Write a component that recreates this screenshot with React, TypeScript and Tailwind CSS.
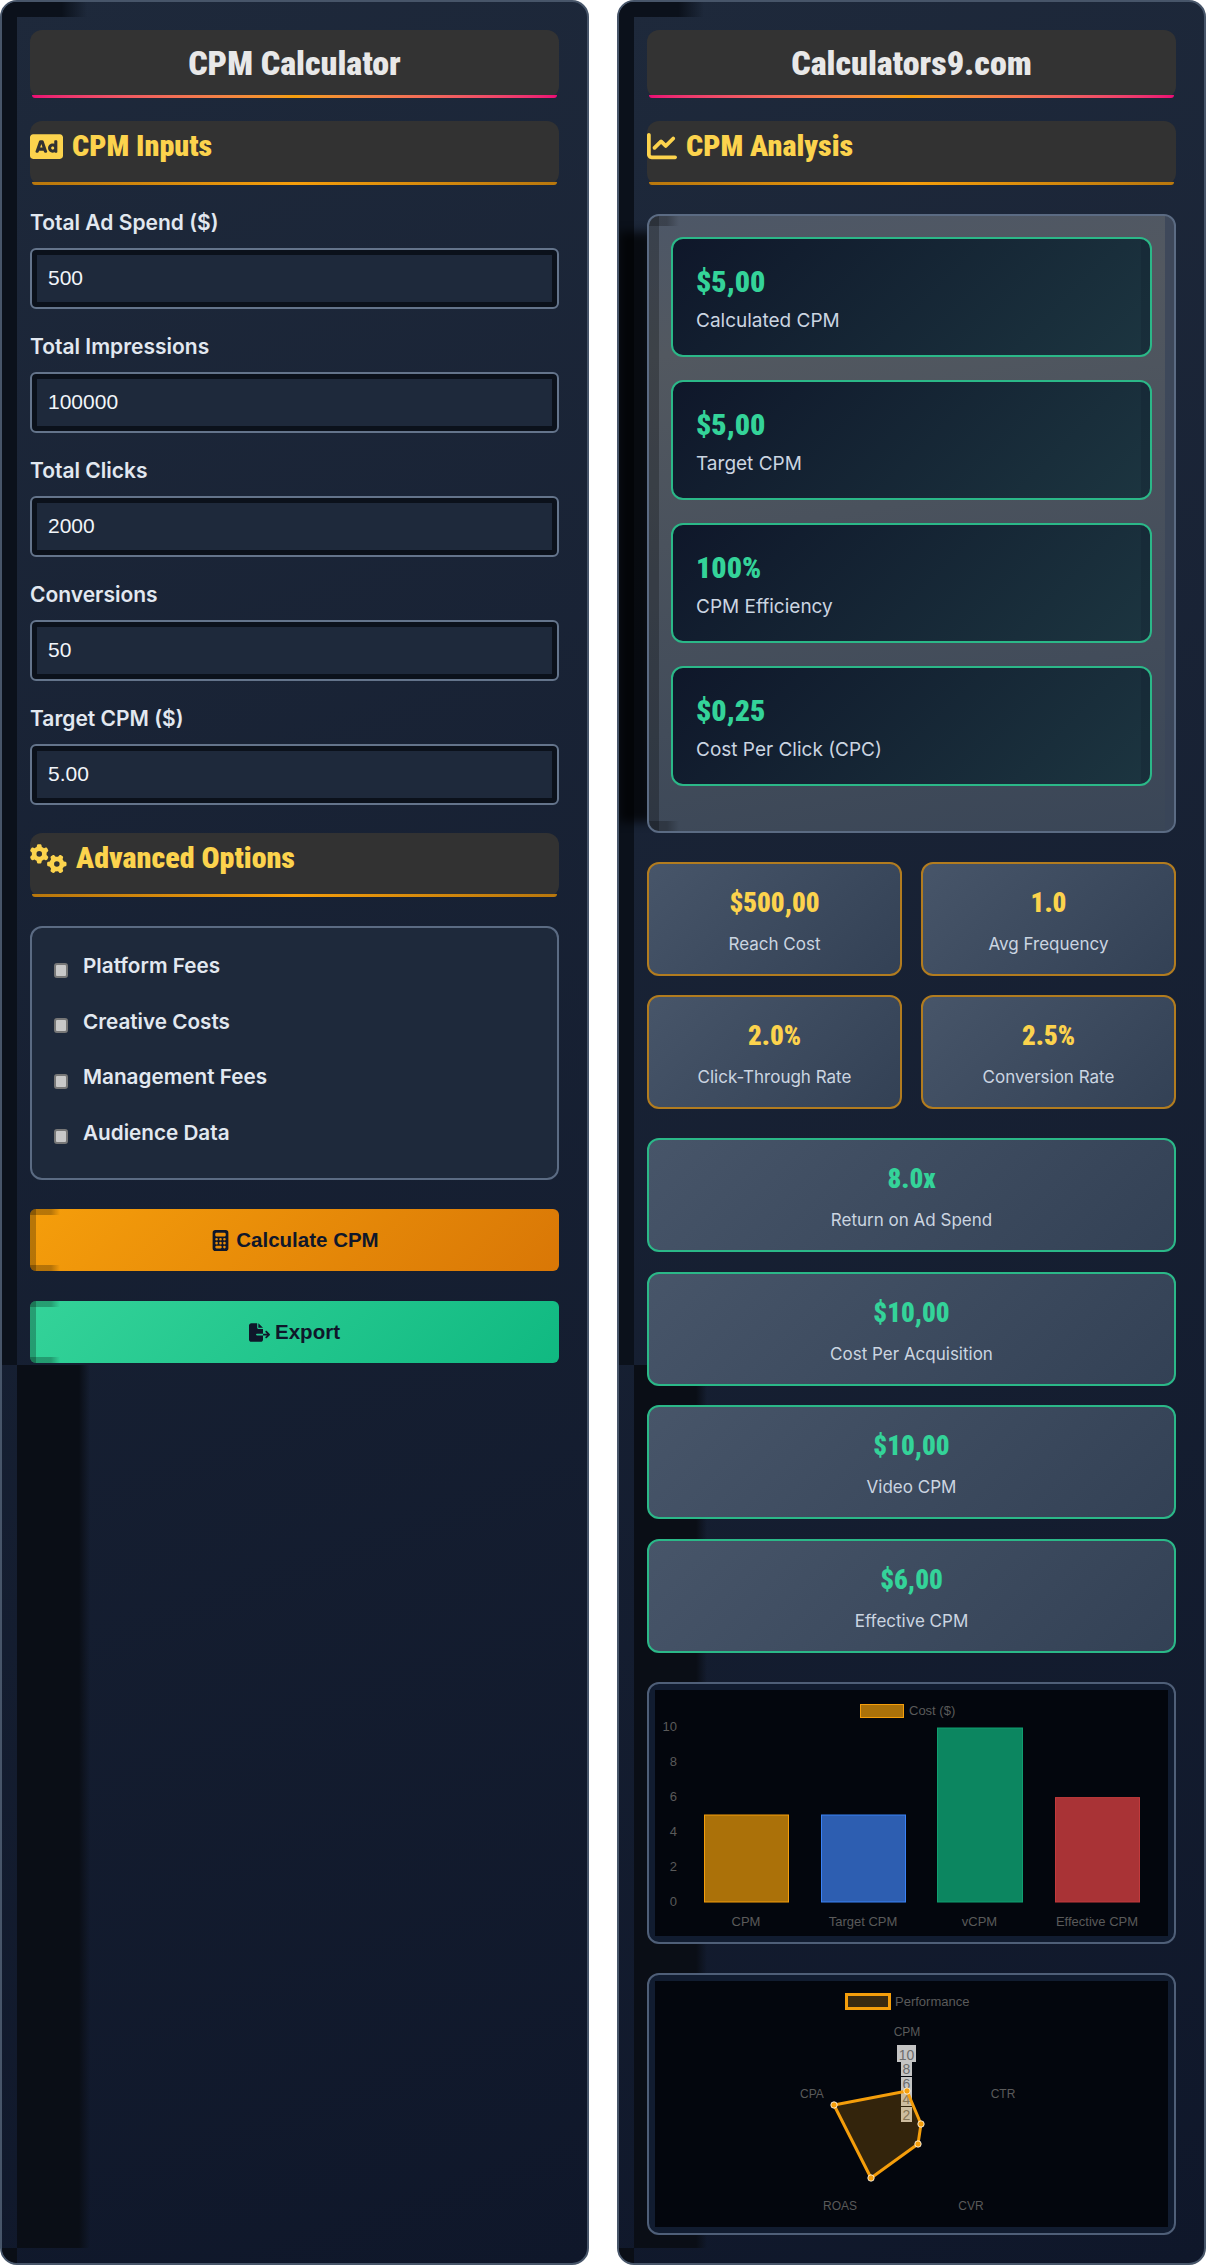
import React from 'react';
import { FaAd } from 'react-icons/fa';
import { FaChartLine, FaGears, FaCalculator, FaFileExport } from 'react-icons/fa6';

const condensed = "font-['Roboto_Condensed','Roboto',sans-serif] font-black [font-stretch:75%]";

const inputs = [
  { label: 'Total Ad Spend ($)', value: '500' },
  { label: 'Total Impressions', value: '100000' },
  { label: 'Total Clicks', value: '2000' },
  { label: 'Conversions', value: '50' },
  { label: 'Target CPM ($)', value: '5.00' },
];

const options = ['Platform Fees', 'Creative Costs', 'Management Fees', 'Audience Data'];

const mainCards = [
  { value: '$5,00', label: 'Calculated CPM' },
  { value: '$5,00', label: 'Target CPM' },
  { value: '100%', label: 'CPM Efficiency' },
  { value: '$0,25', label: 'Cost Per Click (CPC)' },
];

const smallCards = [
  { value: '$500,00', label: 'Reach Cost' },
  { value: '1.0', label: 'Avg Frequency' },
  { value: '2.0%', label: 'Click-Through Rate' },
  { value: '2.5%', label: 'Conversion Rate' },
];

const wideCards = [
  { value: '8.0x', label: 'Return on Ad Spend' },
  { value: '$10,00', label: 'Cost Per Acquisition' },
  { value: '$10,00', label: 'Video CPM' },
  { value: '$6,00', label: 'Effective CPM' },
];

const bars = [
  { x: 49, w: 84, v: 5, fill: '#ab7109', stroke: '#f59e0b', label: 'CPM' },
  { x: 166, w: 84, v: 5, fill: '#2d5eb1', stroke: '#3b82f6', label: 'Target CPM' },
  { x: 282, w: 85, v: 10, fill: '#0c8660', stroke: '#0f9f70', label: 'vCPM' },
  { x: 400, w: 84, v: 6, fill: '#a93336', stroke: '#c23a3c', label: 'Effective CPM' },
];

// dark bands of the panel's inset shadow
const PanelShade = () => (
  <>
    <div className="absolute left-0 top-0 h-[1363px] w-[15px] bg-[#0b111b]" />
    <div className="absolute left-0 top-0 h-[15px] w-[85px] bg-gradient-to-r from-[#0b111b] from-70% to-transparent" />
    <div className="absolute left-[15px] top-[1363px] h-[883px] w-[73px] bg-gradient-to-r from-[#0a0e16] from-85% to-transparent" />
    <div className="absolute bottom-0 left-0 h-[15px] w-[15px] bg-[#0a0e16]" />
  </>
);

const Title = ({ children }: { children: React.ReactNode }) => (
  <div className="relative flex h-[68px] items-center justify-center rounded-[12px] bg-[#333333]">
    <h1 className={`${condensed} pb-[2px] text-[34px] leading-none text-[#e8e8e8]`}>{children}</h1>
    <div className="absolute inset-x-[2px] bottom-0 h-[3px] rounded-b-[6px] bg-gradient-to-r from-[#ec0a74] via-[#f59e0b] to-[#ec0a74]" />
  </div>
);

const Section = ({ icon, children }: { icon: React.ReactNode; children: React.ReactNode }) => (
  <div className="relative flex h-[64px] items-start rounded-[12px] bg-[#323232] pt-[8px]">
    <div className="flex h-[34px] items-center">{icon}</div>
    <h2 className={`${condensed} ml-[9px] text-[30px] leading-[34px] text-[#fcd34d]`}>{children}</h2>
    <div className="absolute inset-x-[2px] bottom-0 h-[3px] rounded-b-[6px] bg-gradient-to-r from-[#b8770d] via-[#f59e0b] to-[#b8770d]" />
  </div>
);

const BarChart = () => (
  <svg width="512" height="246" viewBox="0 0 512 246" className="block font-['Liberation_Sans',sans-serif]">
    <rect x="205.5" y="14.5" width="43" height="13" fill="#ab7109" stroke="#f59e0b" strokeWidth="1" />
    <text x="254" y="24.5" fontSize="13" fill="#5a5a5a">Cost ($)</text>
    {[0, 2, 4, 6, 8, 10].map((t) => (
      <text key={t} x="22" y={212 - t * 17.45 + 3.5} fontSize="13" fill="#5a5a5a" textAnchor="end">{t}</text>
    ))}
    {bars.map((b) => {
      const h = b.v * 17.4;
      return (
        <g key={b.label}>
          <rect x={b.x + 0.5} y={212 - h} width={b.w} height={h} fill={b.fill} stroke={b.stroke} strokeWidth="1" />
          <text x={b.x + b.w / 2} y="236" fontSize="13" fill="#5a5a5a" textAnchor="middle">{b.label}</text>
        </g>
      );
    })}
  </svg>
);

const RadarChart = () => {
  const points: [number, number][] = [[252, 110], [266, 143], [263, 163], [216, 197], [179, 124]];
  const ticks = [
    { t: '10', x: 242, y: 64, w: 19, h: 17 },
    { t: '8', x: 246, y: 81, w: 11, h: 14 },
    { t: '6', x: 246, y: 96, w: 11, h: 14 },
    { t: '4', x: 246, y: 110, w: 11, h: 15 },
    { t: '2', x: 246, y: 126, w: 11, h: 15 },
  ];
  return (
    <svg width="512" height="246" viewBox="0 0 512 246" className="block font-['Liberation_Sans',sans-serif]">
      <rect x="191.5" y="13.5" width="43" height="14" fill="#3a2a10" stroke="#f59e0b" strokeWidth="3" />
      <text x="240" y="24.5" fontSize="13" fill="#5a5a5a">Performance</text>
      {ticks.map((k) => (
        <g key={k.t}>
          <rect x={k.x} y={k.y} width={k.w} height={k.h} fill="#c4c4c4" />
          <text x={k.x + k.w / 2} y={k.y + k.h - 2.5} fontSize="14" fill="#6c6c6c" textAnchor="middle">{k.t}</text>
        </g>
      ))}
      <polygon points={points.map((p) => p.join(',')).join(' ')} fill="#f59e0b" fillOpacity="0.2" stroke="#f59e0b" strokeWidth="3" strokeLinejoin="round" />
      {points.map((p) => (
        <circle key={p.join()} cx={p[0]} cy={p[1]} r="3.2" fill="#f59e0b" stroke="#ffffff" strokeOpacity="0.8" strokeWidth="1" />
      ))}
      <text x="252" y="55" fontSize="12" fill="#5a5a5a" textAnchor="middle">CPM</text>
      <text x="348" y="117" fontSize="12" fill="#5a5a5a" textAnchor="middle">CTR</text>
      <text x="316" y="229" fontSize="12" fill="#5a5a5a" textAnchor="middle">CVR</text>
      <text x="185" y="229" fontSize="12" fill="#5a5a5a" textAnchor="middle">ROAS</text>
      <text x="157" y="117" fontSize="12" fill="#5a5a5a" textAnchor="middle">CPA</text>
    </svg>
  );
};

const ChartFrame = ({ children }: { children: React.ReactNode }) => (
  <div className="mt-[29px] h-[262px] overflow-hidden rounded-[12px] border-2 border-[#4f5f78] bg-[#111c30] p-[6px]">
    <div className="h-[246px] bg-[#03060d]">{children}</div>
  </div>
);

const StatCard = ({ value, label, tone }: { value: string; label: string; tone: 'amber' | 'green' }) => (
  <div
    className={`flex h-[114px] flex-col items-center rounded-[12px] border-2 bg-[linear-gradient(135deg,#475569,#334155)] pt-[22px] ${
      tone === 'amber' ? 'border-[#b27c1f]' : 'border-[#2bb888]'
    }`}
  >
    <div className={`${condensed} text-[27px] leading-[34px] ${tone === 'amber' ? 'text-[#fcd34d]' : 'text-[#34d399]'}`}>{value}</div>
    <div className="mt-[12px] font-['Inter',sans-serif] text-[17px] leading-[24px] text-[#cbd5e1]">{label}</div>
  </div>
);

const ActionButton = ({ icon, label, className }: { icon: React.ReactNode; label: string; className: string }) => (
  <button className={`relative flex h-[62px] items-center justify-center gap-[5px] overflow-hidden rounded-[6px] font-['Liberation_Sans',sans-serif] text-[20.5px] font-bold text-[#0f172a] ${className}`}>
    <span className="absolute inset-y-0 left-0 w-[6px] bg-black/25" />
    <span className="absolute left-0 top-0 h-[6px] w-[30px] bg-gradient-to-r from-black/25 from-70% to-transparent" />
    <span className="absolute bottom-0 left-0 h-[6px] w-[30px] bg-gradient-to-r from-black/25 from-70% to-transparent" />
    {icon}
    <span>{label}</span>
  </button>
);

export default function App() {
  return (
    <div className="grid h-[2265px] grid-cols-[589px_589px] justify-between bg-white font-['Inter',sans-serif]">
      <section className="relative h-[2265px] overflow-hidden rounded-[17px] border-2 border-[#475569] bg-[linear-gradient(160deg,#1e293b,#0f172a)]">
        <PanelShade />
        <div className="relative px-[28px] pt-[28px]">
          <Title>CPM Calculator</Title>
          <div className="mt-[23px]">
            <Section icon={<FaAd className="text-[33px] text-[#fcd34d]" />}>CPM Inputs</Section>
          </div>
          <div className="mt-[24px] flex flex-col gap-[24px]">
            {inputs.map((f) => (
              <div key={f.label}>
                <label className="mb-[13px] block pt-[1px] text-[21px] font-semibold leading-[25px] text-[#e2e8f0]">{f.label}</label>
                <input
                  readOnly
                  value={f.value}
                  className="block h-[61px] w-full rounded-[6px] border-2 border-[#64748b] bg-[#1e293b] pb-[2px] pl-[16px] font-['Liberation_Sans',sans-serif] text-[21px] text-[#f1f5f9] shadow-[inset_0_0_0_5px_#0b111b] outline-none"
                />
              </div>
            ))}
          </div>
          <div className="mt-[28px]">
            <Section icon={<FaGears className="text-[37px] text-[#fcd34d]" />}>Advanced Options</Section>
          </div>
          <div className="mt-[29px] flex h-[254px] flex-col justify-start gap-[29.6px] rounded-[12px] border-2 border-[#5b6b83] bg-[#1e293b] pl-[22px] pt-[25px]">
            {options.map((o) => (
              <div key={o} className="flex h-[26px] items-center gap-[15px]">
                <span className="mt-[8px] h-[15px] w-[14px] rounded-[3px] border-2 border-[#777777] bg-[#c8c8c8]" />
                <span className="text-[20.7px] font-semibold leading-[26px] text-[#e2e8f0]">{o}</span>
              </div>
            ))}
          </div>
          <div className="mt-[29px] flex flex-col gap-[30px]">
            <ActionButton
              icon={<FaCalculator className="text-[21px]" />}
              label="Calculate CPM"
              className="bg-[linear-gradient(135deg,#f59e0b,#d97706)]"
            />
            <ActionButton
              icon={<FaFileExport className="text-[21px]" />}
              label="Export"
              className="bg-[linear-gradient(135deg,#34d399,#10b981)]"
            />
          </div>
        </div>
      </section>

      <section className="relative h-[2265px] overflow-hidden rounded-[17px] border-2 border-[#475569] bg-[linear-gradient(160deg,#1e293b,#0f172a)]">
        <PanelShade />
        {/* shadow the analysis box throws on the panel */}
        <div className="absolute left-0 top-[230px] h-[590px] w-[34px] bg-black/70 blur-[5px]" />
        <div className="relative px-[28px] pt-[28px]">
          <Title>Calculators9.com</Title>
          <div className="mt-[23px]">
            <Section icon={<FaChartLine className="text-[30px] text-[#fcd34d]" />}>CPM Analysis</Section>
          </div>

          <div className="relative mt-[29px] flex h-[619px] flex-col gap-[23px] overflow-hidden rounded-[12px] border-2 border-[#5b6b83] bg-[linear-gradient(170deg,#4d5767,#525860_20%,#3a4657)] px-[22px] pt-[21px]">
            <div className="absolute inset-y-0 left-0 w-[10px] bg-black/25" />
            <div className="absolute left-0 top-0 h-[10px] w-[30px] bg-gradient-to-r from-black/25 from-60% to-transparent" />
            <div className="absolute bottom-0 left-0 h-[10px] w-[30px] bg-gradient-to-r from-black/25 from-60% to-transparent" />
            <div className="absolute inset-y-0 right-0 w-[9px] bg-[#3a4559]/80" />
            {mainCards.map((c) => (
              <div
                key={c.label}
                className="relative h-[120px] shrink-0 overflow-hidden rounded-[12px] border-2 border-[#2bb888] bg-[linear-gradient(135deg,#0f172a,#1c3540)] pl-[23px] pt-[25px]"
              >
                <div className="absolute inset-y-0 right-0 w-[9px] bg-[#0f172a]/20" />
                <div className={`${condensed} text-[30px] leading-[36px] text-[#34d399]`}>{c.value}</div>
                <div className="mt-[8px] text-[19px] leading-[26px] text-[#cbd5e1]">{c.label}</div>
              </div>
            ))}
          </div>

          <div className="mt-[29px] grid grid-cols-2 gap-x-[19px] gap-y-[19px]">
            {smallCards.map((c) => (
              <StatCard key={c.label} value={c.value} label={c.label} tone="amber" />
            ))}
          </div>

          <div className="mt-[29px] flex flex-col gap-[19.7px]">
            {wideCards.map((c) => (
              <StatCard key={c.label} value={c.value} label={c.label} tone="green" />
            ))}
          </div>

          <ChartFrame>
            <BarChart />
          </ChartFrame>
          <ChartFrame>
            <RadarChart />
          </ChartFrame>
        </div>
      </section>
    </div>
  );
}
